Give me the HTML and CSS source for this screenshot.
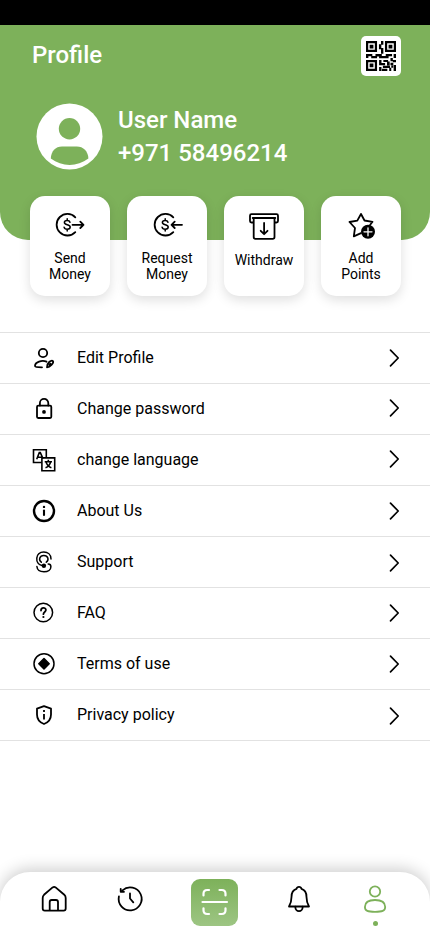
FILE: index.html
```html
<!DOCTYPE html>
<html lang="en">
<head>
<meta charset="utf-8">
<title>Profile</title>
<link rel="stylesheet" href="styles.css">
</head>
<body>
<div class="screen">
  <div class="status"></div>
  <header class="header">
    <div class="titlebar">
      <h1>Profile</h1>
      <div class="qr">
        <svg width="30" height="30" viewBox="0 0 19 19" fill="#000">
          <path fill-rule="evenodd" d="M0 0h7v7H0zM1.400 1.400v4.200h4.200V1.400zM12 0h7v7h-7zM13.400 1.400v4.200h4.200V1.400zM0 12h7v7H0zM1.400 13.400v4.200h4.200v-4.200z"/>
          <path d="M2.300 2.300h2.400v2.400h-2.400zM14.300 2.300h2.400v2.400h-2.400zM2.300 14.300h2.400v2.400h-2.400zM9.500 0h1.500v2.400H9.500zM8.200 2h1.500v3.200H8.200zM9.500 4.500h1.500v3.500H9.500zM0 8.300h1.500v2.500H0zM1.300 8.300h2.700v1.400h-2.700zM3.300 9.500h3.700v1.500h-3.700zM6 8.300h4v1.500h-4zM8.300 9.500h6v1.500h-6zM12.500 8.300h4v1.400h-4zM17.500 8.300h1.500v2.400h-1.500zM15.500 10.800h1.500v2h-1.500zM17 12h2v1.400h-2zM8.300 12h1.500v3.400h-1.500zM9.600 14h2.500v1.400h-2.500zM11 12h3v1.300h-3zM13.300 13h1.700v2.500h-1.700zM15.500 13.800h1.800v1.500h-1.800zM10.700 15.700h4.500v1.400h-4.500zM8.300 16.400v2.600h1.500v-2.600zM9.500 17.600h4v1.400h-4zM14.700 17h1.300v2h-1.300zM16 15.500h1.200v1.500h-1.200zM17.500 15.200h1.500v3.800h-1.500z"/>
        </svg>
      </div>
    </div>
    <div class="user">
      <svg class="avatar" width="66" height="66" viewBox="0.5 0.5 66 66">
        <circle cx="33" cy="33" r="33" fill="#fff"/>
        <circle cx="33" cy="25.200" r="10.700" fill="#7db15a"/>
        <path d="M14.300 55C14.500 47.700 19 42.900 25.500 42.900H40.300C46.800 42.900 51.700 47.700 51.900 55C40.700 63.500 25.500 63.500 14.300 55Z" fill="#7db15a"/>
      </svg>
      <div class="who"><div>User Name</div><div>+971 58496214</div></div>
    </div>
  </header>
  <section class="cards">
    <div class="card">
      <svg width="32" height="30" viewBox="54 210 32 30" class="ln">
        <path d="M75.300 217.300A10.800 10.800 0 1 0 75.300 232.100M72.500 224.800H83.500M80.300 221.600L83.500 224.800L80.300 228"/>
        <path class="usd" d="M70 222.200C69.600 220.900 68.500 220.400 67.200 220.400C65.500 220.400 64.400 221.200 64.400 222.500C64.400 225.500 70.200 223.900 70.200 227.100C70.200 228.500 68.900 229.300 67.200 229.300C65.600 229.300 64.400 228.500 64.100 227.200M67.200 218.800V220.400M67.200 229.300V230.900"/>
      </svg>
      <span>Send<br>Money</span>
    </div>
    <div class="card">
      <svg width="32" height="30" viewBox="151 210 32 30" class="ln">
        <path d="M173.300 217.300A10.800 10.800 0 1 0 173.300 232.100M171.500 224.800H182M174.700 221.600L171.500 224.800L174.700 228"/>
        <path class="usd" d="M168 222.200C167.600 220.900 166.500 220.400 165.200 220.400C163.500 220.400 162.400 221.200 162.400 222.500C162.400 225.500 168.200 223.900 168.200 227.100C168.200 228.500 166.900 229.300 165.200 229.300C163.600 229.300 162.400 228.500 162.100 227.200M165.200 218.800V220.400M165.200 229.300V230.900"/>
      </svg>
      <span>Request<br>Money</span>
    </div>
    <div class="card single">
      <svg width="32" height="30" viewBox="248 210 32 30" class="ln">
        <path d="M253.500 222.500H251.500Q250 222.500 250 221V215.700Q250 214.200 251.500 214.200H276.500Q278 214.200 278 215.700V221Q278 222.500 276.500 222.500H274.700M252.700 218H275.300M253.700 218V237Q253.700 238.800 255.500 238.800H272.700Q274.500 238.800 274.500 237V218M264.100 223V234M260.700 230.800L264.100 234.200L267.500 230.800"/>
      </svg>
      <span>Withdraw</span>
    </div>
    <div class="card">
      <svg width="32" height="30" viewBox="345 210 32 30" class="ln">
        <path d="M361 214L364.500 220.500L372.500 221.800L370 225M361 214L357.300 220.600L349.500 222L355 228L353.800 236.300L361 233.200"/>
        <circle cx="368" cy="231.800" r="7" fill="#000" stroke="none"/>
        <path d="M368 227.800V235.800M364 231.800H372" stroke="#fff" class="plus"/>
      </svg>
      <span>Add<br>Points</span>
    </div>
  </section>
  <main class="list">
    <a class="row">
      <svg class="ic ln" width="28" height="28" viewBox="30 344 28 28"><circle cx="43" cy="353" r="4.200"/><path d="M46.500 361.700C42 359.800 35 362 35 366C35 367.200 38 367.300 42 367.300"/><path d="M47 367.300C46.700 365.300 47.700 363.500 49.200 362C50.600 360.700 52.200 360.300 52.900 361.100C53.600 362 52.800 363.600 51.500 365C50 366.600 48.500 367.300 47 367.300ZM49.300 365L50.500 363.700"/></svg>
      <span>Edit Profile</span><svg class="ch" width="12" height="18" viewBox="0 0 12 18"><path d="M1.500 1.200L9.200 9L1.500 16.800"/></svg>
    </a>
    <a class="row">
      <svg class="ic ln" width="28" height="28" viewBox="30 395 28 28"><rect x="37" y="405.700" width="14.300" height="12.300" rx="1.200"/><path d="M39.900 405.500V403A4.200 4.200 0 0 1 48.300 403V405.500"/><circle cx="44" cy="411.900" r="1.900" fill="#000" stroke="none"/></svg>
      <span>Change password</span><svg class="ch up" width="12" height="18" viewBox="0 0 12 18"><path d="M1.500 1.200L9.200 9L1.500 16.800"/></svg>
    </a>
    <a class="row">
      <svg class="ic ln sq" width="28" height="28" viewBox="30 446 28 28"><path d="M41.500 462.500H33.500V449.700H46.300V457.500M41.900 457.900H54.700V470.700H41.900Z"/><path d="M36.700 459.300L39.300 452.600H40.300L43 458.500M38 457.200H42M44.700 461.700H52M48.300 459.800V461.700M45.500 467.800C48.500 466.800 50 464.800 50.600 461.900M51.400 467.800C48.500 466.800 46.800 464.800 46 461.900"/></svg>
      <span>change language</span><svg class="ch up" width="12" height="18" viewBox="0 0 12 18"><path d="M1.500 1.200L9.200 9L1.500 16.800"/></svg>
    </a>
    <a class="row">
      <svg class="ic ln" width="28" height="28" viewBox="30 497 28 28"><circle cx="44" cy="511" r="10" stroke-width="2.400"/><path d="M44 510.500V515" stroke-width="2.100"/><circle cx="44" cy="506.900" r="1.200" fill="#000" stroke="none"/></svg>
      <span>About Us</span><svg class="ch" width="12" height="18" viewBox="0 0 12 18"><path d="M1.500 1.200L9.200 9L1.500 16.800"/></svg>
    </a>
    <a class="row">
      <svg class="ic ln thin" width="28" height="28" viewBox="30 548 28 28"><path d="M42 565.500C34.500 564 35 552 43.800 552C47.700 552 51 554.500 51 559"/><path d="M41.300 562.200C38.300 560 39.500 555.400 43.800 555.400C48.200 555.400 49.300 560 46.300 562.200"/><path d="M36.900 566.500C37.200 569.700 40 571.800 44 571.800C48.200 571.800 50.900 569.500 50.900 566.700Q50.900 564 48.200 564"/><circle cx="43.900" cy="565.700" r="2.200" fill="#000" stroke="none"/></svg>
      <span>Support</span><svg class="ch half" width="12" height="18" viewBox="0 0 12 18"><path d="M1.500 1.200L9.200 9L1.500 16.800"/></svg>
    </a>
    <a class="row">
      <svg class="ic ln thin" width="28" height="28" viewBox="30 599 28 28"><circle cx="43.300" cy="612.500" r="9.300"/><path d="M41 610.500C41 607 45.900 607.200 45.900 610C45.900 612 43.400 612 43.400 614.200" stroke-width="1.800"/><circle cx="43.400" cy="617" r="1.100" fill="#000" stroke="none"/></svg>
      <span>FAQ</span><svg class="ch" width="12" height="18" viewBox="0 0 12 18"><path d="M1.500 1.200L9.200 9L1.500 16.800"/></svg>
    </a>
    <a class="row">
      <svg class="ic ln thin" width="28" height="28" viewBox="30 650 28 28"><circle cx="44" cy="663.700" r="10"/><path d="M44 658.500L49.200 663.700L44 668.900L38.800 663.700Z" fill="#000"/></svg>
      <span>Terms of use</span><svg class="ch" width="12" height="18" viewBox="0 0 12 18"><path d="M1.500 1.200L9.200 9L1.500 16.800"/></svg>
    </a>
    <a class="row">
      <svg class="ic ln" width="28" height="28" viewBox="30 701 28 28"><path d="M44 706.200L51 708.700V714.500C51 719 48 722.500 44 724C40 722.500 37 719 37 714.500V708.700Z"/><path d="M44 714V719.500M44 710V712" class="butt"/></svg>
      <span>Privacy policy</span><svg class="ch down" width="12" height="18" viewBox="0 0 12 18"><path d="M1.500 1.200L9.200 9L1.500 16.800"/></svg>
    </a>
  </main>
  <nav class="nav">
    <svg class="ln" width="30" height="30" viewBox="39 884 30 30"><path d="M42.700 898Q42.700 896 44 894.800L52.600 887.400Q54.100 886.300 55.600 887.400L64.300 894.800Q65.700 896 65.700 898V908.500Q65.700 910.600 63.600 910.600H44.800Q42.700 910.600 42.700 908.500ZM49.700 910.500V902Q49.700 900 51.700 900H56Q58 900 58 902V910.500"/></svg>
    <svg class="ln" width="30" height="30" viewBox="115 884 30 30"><path d="M118.900 896.500A11.500 11.500 0 1 0 122.500 890.300M120.700 888.800V891.800H124M130 893.500V898.500L133.300 902.300"/></svg>
    <div class="scan"><svg width="30" height="30" viewBox="-1 0 30 30"><path d="M9 3H7.200Q3.500 3 3.500 6.700V8.500M19.500 3H21.800Q25.500 3 25.500 6.700V8.500M3.500 21.300V23.300Q3.500 27 7.200 27H9M25.500 21.300V23.300Q25.500 27 21.800 27H19.500M2.500 15H27"/></svg></div>
    <svg class="ln" width="30" height="30" viewBox="284 884 30 30"><path d="M289 906.500C290.800 903.500 291.500 901 291.500 897C291.500 892.500 293.500 889.700 296.500 888.900Q297 886.800 299 886.800Q301 886.800 301.500 888.900C304.500 889.700 306.500 892.500 306.500 897C306.500 901 307.200 903.500 309 906.500Z"/><path d="M295.300 906.700A3.700 4.500 0 0 0 302.700 906.700"/></svg>
    <div class="me"><svg class="ln" width="30" height="30" viewBox="360 884 30 30"><circle cx="375" cy="891.500" r="5.200"/><path d="M364.900 907C364.900 902.500 368.500 900 375 900C381.500 900 385.200 902.500 385.200 907C385.200 911 382 911.800 375 911.800C368 911.800 364.900 911 364.900 907Z"/></svg><i class="dot"></i></div>
  </nav>
</div>
</body>
</html>
```
FILE: styles.css
```css
* { box-sizing: border-box; }
body { margin: 0; background: #fff; color: #000; font-family: Roboto, sans-serif; }
.screen { width: 430px; height: 932px; display: flex; flex-direction: column; overflow: hidden; }
.screen svg { display: block; flex: none; overflow: visible; }
.status { height: 25px; flex: none; background: #000; }
.header { height: 215px; flex: none; background: #7db15a; border-radius: 0 0 28px 28px; color: #fff; padding: 11px 29px 0 32px; }
.titlebar { display: flex; justify-content: space-between; height: 40px; }
h1 { margin: 4px 0 0; font-size: 24px; line-height: 30px; font-weight: 500; }
.qr { width: 40px; height: 40px; border-radius: 5px; background: #fff; padding: 5px; }
.user { display: flex; gap: 15px; padding: 28px 0 0 5px; }
.who { font-size: 24px; line-height: 33px; font-weight: 500; }
.cards { display: flex; gap: 17px; margin: -44px 29px 0 30px; flex: none; }
.card { width: 80px; height: 100px; background: #fff; border-radius: 15px; box-shadow: 0 4px 12px rgba(0,0,0,.13); display: flex; flex-direction: column; align-items: center; padding-top: 14px; text-align: center; font-size: 14px; line-height: 16px; gap: 10px; }
.single { gap: 12px; }
.ln { fill: none; stroke: #000; stroke-width: 1.8; stroke-linecap: round; stroke-linejoin: round; }
.usd { stroke-width: 1.5; }
.plus { stroke-width: 1.3; }
.butt { stroke-linecap: butt; }
.thin { stroke-width: 1.5; }
.sq { stroke-width: 1.6; stroke-linejoin: miter; stroke-linecap: butt; }
.list { margin-top: 36px; border-top: 1px solid #e2e2e2; flex: none; }
.row { display: flex; align-items: center; height: 51px; border-bottom: 1px solid #e2e2e2; padding: 0 29px 0 30px; font-size: 16px; }
.row span { flex: 1; margin-left: 19px; padding-bottom: 2px; }
.ch { fill: none; stroke: #000; stroke-width: 1.7; stroke-linecap: round; stroke-linejoin: round; }
.up { margin-top: -2px; }
.half { margin-top: 1px; }
.down { margin-top: 2px; }
.nav { margin-top: auto; height: 60px; flex: none; background: #fff; border-radius: 30px 30px 0 0; box-shadow: 0 -3px 16px rgba(0,0,0,.2); display: flex; justify-content: space-between; align-items: flex-start; padding: 12px 40px 0 39px; }
.scan { width: 47px; height: 47px; margin-top: -5px; border-radius: 9px; background: linear-gradient(#7db15a, #9dc583); padding: 8px; }
.scan svg { fill: none; stroke: #fff; stroke-width: 2.2; stroke-linecap: round; }
.me { display: flex; flex-direction: column; align-items: center; gap: 7px; }
.me .ln { stroke: #7db15a; }
.dot { width: 5px; height: 5px; border-radius: 50%; background: #7db15a; }
```
